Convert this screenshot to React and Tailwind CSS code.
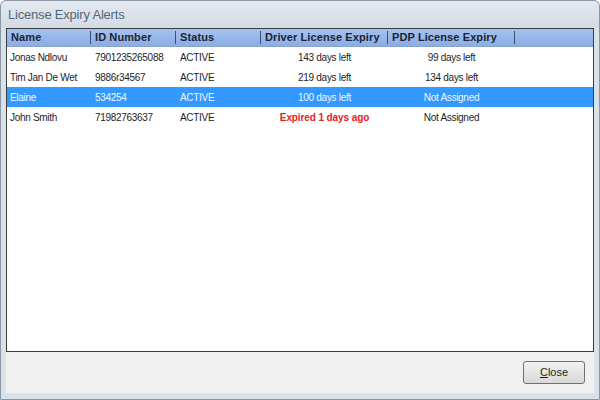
import React from 'react';

const rows = [
  { name: 'Jonas Ndlovu', id: '7901235265088', status: 'ACTIVE', driver: '143 days left', pdp: '99 days left' },
  { name: 'Tim Jan De Wet', id: '9886r34567', status: 'ACTIVE', driver: '219 days left', pdp: '134 days left' },
  { name: 'Elaine', id: '534254', status: 'ACTIVE', driver: '100 days left', pdp: 'Not Assigned', selected: true },
  { name: 'John Smith', id: '71982763637', status: 'ACTIVE', driver: 'Expired 1 days ago', pdp: 'Not Assigned', expired: true },
];

const HeaderCell = ({ children, w }) => (
  <div className={`${w} h-full flex items-center pl-[4px] relative`}>
    <span>{children}</span>
    <span className="absolute right-0 top-[2px] bottom-[2px] w-px bg-[#3d4f70]" />
  </div>
);

const App = () => {
  return (
    <div
      className="w-[600px] h-[400px] bg-[#d9e1e9] border border-[#8a96a3] rounded-t-[6px] flex flex-col text-[10px] tracking-[-0.3px] text-[#1e1e1e]"
      style={{ fontFamily: '"Liberation Sans", Arial, sans-serif' }}
    >
      <div className="h-[27px] flex items-center pl-[7px] bg-gradient-to-b from-[#e4e9ef] to-[#d3dbe4] rounded-t-[6px]">
        <span className="text-[13px] text-[#56667a] tracking-[-0.2px]">License Expiry Alerts</span>
      </div>
      <div className="flex-1 flex flex-col px-[5px]">
        <div className="flex-1 bg-white border border-[#3c3c3c] flex flex-col">
          <div className="h-[18px] flex bg-gradient-to-b from-[#a6c1ee] to-[#8aade6] font-bold text-[11px] tracking-[0.1px] text-[#1a2433] border-b border-[#8aa3c8]">
            <HeaderCell w="w-[84px]">Name</HeaderCell>
            <HeaderCell w="w-[85px]">ID Number</HeaderCell>
            <HeaderCell w="w-[85px]">Status</HeaderCell>
            <HeaderCell w="w-[127px]">Driver License Expiry</HeaderCell>
            <HeaderCell w="w-[127px]">PDP License Expiry</HeaderCell>
          </div>
          {rows.map((r) => (
            <div
              key={r.name}
              className={`h-[20px] flex items-center ${r.selected ? 'bg-[#3399ff] text-[#eef6ff]' : ''}`}
            >
              <div className="w-[84px] pl-[3px]">{r.name}</div>
              <div className="w-[85px] pl-[4px]">{r.id}</div>
              <div className="w-[85px] pl-[4px]">{r.status}</div>
              <div className={`w-[127px] text-center ${r.expired ? 'text-[#e8201c] font-bold tracking-[-0.1px]' : ''}`}>{r.driver}</div>
              <div className="w-[127px] text-center">{r.pdp}</div>
            </div>
          ))}
        </div>
        <div className="h-[41px] bg-[#f0f0f0] flex items-center justify-end pr-[9px]">
          <button className="w-[62px] h-[23px] rounded-[3px] border border-[#707070] bg-gradient-to-b from-[#f2f2f2] to-[#d9d9d9] text-[11px] tracking-normal text-[#1e1e1e] flex items-center justify-center">
            <span><span className="underline">C</span>lose</span>
          </button>
        </div>
      </div>
      <div className="h-[6px]" />
    </div>
  );
};

export default App;
